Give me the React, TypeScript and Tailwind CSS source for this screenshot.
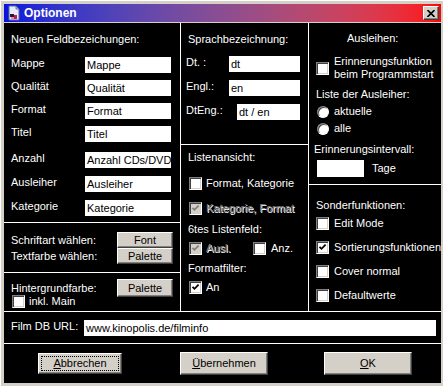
const feldRows = [
  { label: "Mappe", value: "Mappe", mt: "mt-[11px]" },
  { label: "Qualität", value: "Qualität", mt: "mt-[7px]" },
  { label: "Format", value: "Format", mt: "mt-[7px]" },
  { label: "Titel", value: "Titel", mt: "mt-[7px]" },
  { label: "Anzahl", value: "Anzahl CDs/DVD", mt: "mt-[10px]" },
  { label: "Ausleiher", value: "Ausleiher", mt: "mt-[8px]" },
  { label: "Kategorie", value: "Kategorie", mt: "mt-[8px]" },
];

const sonder = [
  { label: "Edit Mode", checked: false, mt: "mt-[5px]" },
  { label: "Sortierungsfunktionen", checked: true, mt: "mt-[11px]" },
  { label: "Cover normal", checked: false, mt: "mt-[11px]" },
  { label: "Defaultwerte", checked: false, mt: "mt-[11px]" },
];

function Field({ value, className = "" }: { value: string; className?: string }) {
  return (
    <div className={`bg-white text-black h-[16px] leading-[16px] px-[2px] whitespace-nowrap overflow-hidden ${className}`}>
      {value}
    </div>
  );
}

function Check({ checked = false, disabled = false }: { checked?: boolean; disabled?: boolean }) {
  return (
    <div
      className={`w-[13px] h-[13px] shrink-0 border border-t-[#808080] border-l-[#808080] border-r-white border-b-white shadow-[inset_1px_1px_0_#404040,inset_-1px_-1px_0_#d4d0c8] flex items-center justify-center ${
        disabled ? "bg-[#d4d0c8]" : "bg-white"
      }`}
    >
      {checked && (
        <svg width="9" height="9" viewBox="0 0 9 9" aria-hidden="true">
          <path d="M1.5 3.8 L3.5 5.8 L7.6 1.7" fill="none" stroke={disabled ? "#808080" : "#000"} strokeWidth="1.8" />
        </svg>
      )}
    </div>
  );
}

function Radio() {
  return (
    <div className="w-[12px] h-[12px] shrink-0 rounded-full bg-white border border-t-[#808080] border-l-[#808080] border-r-white border-b-white shadow-[inset_1px_1px_0_#404040]" />
  );
}

function WinButton({ children, className = "" }: { children: React.ReactNode; className?: string }) {
  return (
    <div
      className={`bg-[#d4d0c8] text-black flex items-center justify-center border border-t-white border-l-white border-r-[#404040] border-b-[#404040] shadow-[inset_-1px_-1px_0_#808080] ${className}`}
    >
      {children}
    </div>
  );
}

const disabledText = "text-[#808080] [text-shadow:1px_1px_0_#ffffff]";

export default function App() {
  return (
    <div className="w-[443px] h-[386px] bg-[#d4d0c8] pt-[3px] pl-[3px] pr-[2px] pb-[3px] flex flex-col font-['Liberation_Sans',Arial,sans-serif] text-[11px] leading-[13px] border-t border-l border-white">
      {/* Title bar */}
      <div className="h-[18px] shrink-0 flex items-center bg-gradient-to-r from-[#0c10dc] to-[#ff0000]">
        <svg width="16" height="16" viewBox="0 0 16 16" className="ml-[2px] shrink-0" aria-hidden="true">
          <polygon points="3,1 10,1 13,4 13,15 3,15" fill="#e4ecf8" stroke="#5070a0" strokeWidth="1" />
          <polygon points="10,1 10,4 13,4" fill="#b0c0d8" stroke="#5070a0" strokeWidth="0.8" />
          <rect x="4" y="9" width="4" height="3" fill="#202020" />
          <rect x="8" y="10" width="3" height="4" fill="#d01060" />
          <rect x="5" y="12" width="3" height="2" fill="#f080b0" />
        </svg>
        <span className="ml-[2px] text-white font-bold text-[12px]">Optionen</span>
        <div className="ml-auto mr-[2px] w-[16px] h-[14px] bg-[#d4d0c8] border border-t-white border-l-white border-r-[#404040] border-b-[#404040] shadow-[inset_-1px_-1px_0_#808080] flex items-center justify-center">
          <svg width="8" height="7" viewBox="0 0 8 7" aria-hidden="true">
            <path d="M0.5 0 L7.5 7 M7.5 0 L0.5 7" stroke="#000" strokeWidth="1.6" />
          </svg>
        </div>
      </div>
      <div className="h-px shrink-0" />

      {/* Content */}
      <div className="flex-1 bg-black text-white flex flex-col">
        <div className="h-[289px] shrink-0 flex border-b border-white">
          {/* Left column */}
          <div className="w-[177px] shrink-0 border-r border-white flex flex-col">
            <div className="h-[200px] shrink-0 border-b border-white px-[7px] pt-[10px] flex flex-col">
              <div>Neuen Feldbezeichungen:</div>
              {feldRows.map((r) => (
                <div key={r.label} className={`flex items-start ${r.mt}`}>
                  <span className="w-[74px] shrink-0">{r.label}</span>
                  <Field value={r.value} className="w-[86px]" />
                </div>
              ))}
            </div>
            <div className="h-[50px] shrink-0 border-b border-white px-[7px] pt-[9px] flex flex-col">
              <div className="flex items-center h-[16px]">
                <span className="flex-1">Schriftart wählen:</span>
                <WinButton className="w-[56px] h-[16px]">Font</WinButton>
              </div>
              <div className="flex items-center h-[16px]">
                <span className="flex-1">Textfarbe wählen:</span>
                <WinButton className="w-[56px] h-[16px]">Palette</WinButton>
              </div>
            </div>
            <div className="flex-1 px-[7px] flex">
              <div className="flex-1 pt-[9px] flex flex-col">
                <div>Hintergrundfarbe:</div>
                <div className="flex items-center gap-[4px] ml-[1px]">
                  <Check />
                  <span>inkl. Main</span>
                </div>
              </div>
              <WinButton className="w-[56px] h-[18px] mt-[6px]">Palette</WinButton>
            </div>
          </div>

          {/* Middle column */}
          <div className="w-[128px] shrink-0 border-r border-white flex flex-col">
            <div className="h-[122px] shrink-0 border-b border-white pl-[5px] pt-[10px] flex flex-col">
              <div className="ml-[2px]">Sprachbezeichnung:</div>
              <div className="flex items-start mt-[10px]">
                <span className="w-[43px] shrink-0">Dt. :</span>
                <Field value="dt" className="w-[71px]" />
              </div>
              <div className="flex items-start mt-[8px]">
                <span className="w-[43px] shrink-0">Engl.:</span>
                <Field value="en" className="w-[71px]" />
              </div>
              <div className="flex items-start mt-[8px]">
                <span className="w-[51px] shrink-0">DtEng.:</span>
                <Field value="dt / en" className="w-[63px]" />
              </div>
            </div>
            <div className="flex-1 pl-[7px] pt-[6px] flex flex-col">
              <div>Listenansicht:</div>
              <div className="flex items-center gap-[4px] h-[13px] mt-[13px] ml-[1px]">
                <Check />
                <span>Format, Kategorie</span>
              </div>
              <div className="flex items-center gap-[4px] h-[13px] mt-[12px] ml-[1px]">
                <Check checked disabled />
                <span className={disabledText}>Kategorie, Format</span>
              </div>
              <div className="mt-[8px]">6tes Listenfeld:</div>
              <div className="flex items-center h-[13px] mt-[6px] ml-[1px]">
                <Check checked disabled />
                <span className={`ml-[4px] w-[47px] ${disabledText}`}>Ausl.</span>
                <Check />
                <span className="ml-[5px]">Anz.</span>
              </div>
              <div className="mt-[7px]">Formatfilter:</div>
              <div className="flex items-center gap-[4px] h-[13px] mt-[6px] ml-[1px]">
                <Check checked />
                <span>An</span>
              </div>
            </div>
          </div>

          {/* Right column */}
          <div className="flex-1 flex flex-col">
            <div className="h-[162px] shrink-0 border-b border-white pl-[7px] pt-[9px] flex flex-col">
              <div className="ml-[31px]">Ausleihen:</div>
              <div className="flex items-center gap-[5px] mt-[10px]">
                <Check />
                <span>
                  Erinnerungsfunktion
                  <br />
                  beim Programmstart
                </span>
              </div>
              <div className="mt-[7px]">Liste der Ausleiher:</div>
              <div className="flex items-center gap-[5px] h-[13px] mt-[4px] ml-[1px]">
                <Radio />
                <span>aktuelle</span>
              </div>
              <div className="flex items-center gap-[5px] h-[13px] mt-[4px] ml-[1px]">
                <Radio />
                <span>alle</span>
              </div>
              <div className="mt-[8px] -ml-[2px]">Erinnerungsintervall:</div>
              <div className="flex items-center mt-[4px] ml-[1px]">
                <div className="w-[47px] h-[17px] bg-white" />
                <span className="ml-[8px]">Tage</span>
              </div>
            </div>
            <div className="flex-1 pl-[7px] pt-[14px] flex flex-col">
              <div>Sonderfunktionen:</div>
              {sonder.map((s) => (
                <div key={s.label} className={`flex items-center gap-[5px] h-[13px] ${s.mt}`}>
                  <Check checked={s.checked} />
                  <span className="whitespace-nowrap">{s.label}</span>
                </div>
              ))}
            </div>
          </div>
        </div>

        {/* URL row */}
        <div className="h-[32px] shrink-0 border-b border-white flex items-start pl-[7px] pt-[8px]">
          <span className="w-[73px] shrink-0">Film DB URL:</span>
          <Field value="www.kinopolis.de/filminfo" className="w-[352px]" />
        </div>

        {/* Buttons */}
        <div className="flex-1 flex items-start pl-[33px] pt-[8px]">
          <div className="w-[86px] h-[23px] border border-black flex">
            <WinButton className="flex-1">
              <span className="flex-1 self-stretch m-[2px] border border-dotted border-black flex items-center justify-center">
                <span><span className="underline">A</span>bbrechen</span>
              </span>
            </WinButton>
          </div>
          <WinButton className="w-[88px] h-[23px] ml-[57px]">
            <span><span className="underline">Ü</span>bernehmen</span>
          </WinButton>
          <WinButton className="w-[88px] h-[23px] ml-[56px]">
            <span><span className="underline">O</span>K</span>
          </WinButton>
        </div>
      </div>
    </div>
  );
}
